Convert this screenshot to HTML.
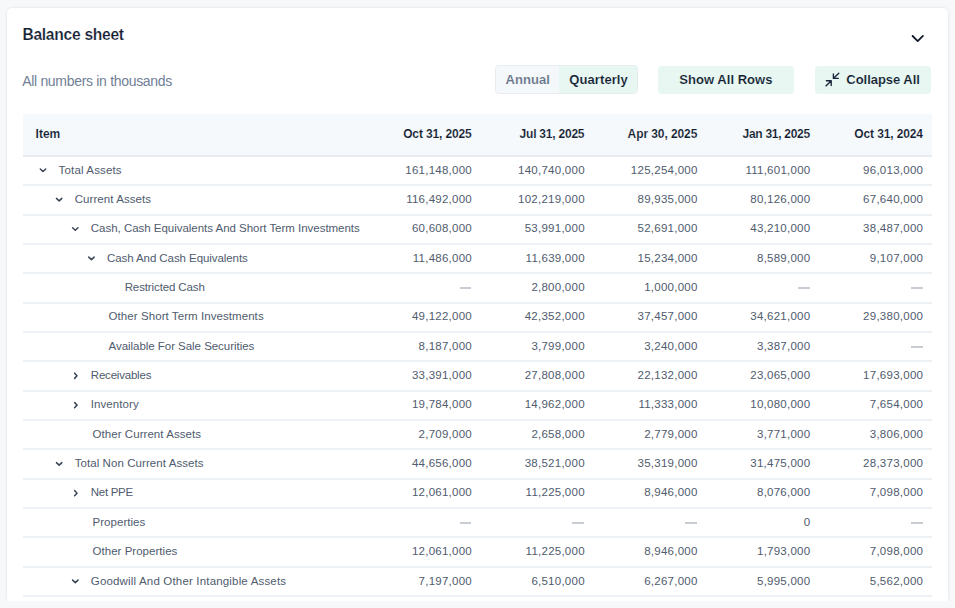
<!DOCTYPE html>
<html><head><meta charset="utf-8"><style>
*{margin:0;padding:0;box-sizing:border-box}
html,body{width:955px;height:608px;overflow:hidden;background:#f7f8fa;font-family:"Liberation Sans",sans-serif}
.card{position:absolute;left:6.8px;top:7.6px;width:940.9px;height:593.4px;background:#fff;border-radius:5px 5px 0 0;box-shadow:0 0 3px rgba(15,23,42,0.10)}
.bstrip{position:absolute;left:0;top:601px;width:955px;height:7px;background:#f7f8fa}
.t{position:absolute;white-space:nowrap;line-height:1}
.title{font-size:15.6px;font-weight:bold;color:#141e33;-webkit-text-stroke:0.2px #fff}
.sub{font-size:14px;color:#718096}
.btn{position:absolute;background:#e8f7f2;border-radius:4px}
.bt{font-size:13px;font-weight:bold;color:#141e33;-webkit-text-stroke:0.12px #e8f7f2}
.thead{position:absolute;left:22.5px;top:113.67px;width:909.5px;height:43.0px;background:#f6f9fc;}
.th{font-size:12px;font-weight:bold;color:#141e33;-webkit-text-stroke:0.12px #f6f9fc}
.ln{position:absolute;left:22.5px;width:909.5px;height:2px}
.td{font-size:11.5px;color:#4f5b6e}
.num{font-size:11.5px;color:#4f5b6e;text-align:right}
.dash{color:#c8ccd3}
svg{position:absolute;overflow:visible}
</style></head><body>
<div class="card"></div>
<div class="bstrip"></div>
<div class="t title" style="left:22.40px;top:26.79px;letter-spacing:-0.267px;">Balance sheet</div>
<svg style="left:0;top:0" width="955" height="608"><path d="M912.6 36 L917.7 41.1 L922.9 35.9" fill="none" stroke="#111827" stroke-width="1.8" stroke-linecap="round" stroke-linejoin="round"/></svg>
<div class="t sub" style="left:22.20px;top:73.75px;letter-spacing:-0.310px;">All numbers in thousands</div>
<div class="btn" style="left:495.4px;top:65.3px;width:143px;height:28.6px;background:#f5f8fb;border:1px solid #e8ecf1;border-radius:3.5px;overflow:hidden"><div style="position:absolute;left:63px;top:0;width:80px;height:100%;background:#e8f7f2"></div></div>
<div class="t bt" style="left:505.60px;top:73.10px;letter-spacing:0.026px;color:#66748a;-webkit-text-stroke:0.12px #f5f8fb;">Annual</div>
<div class="t bt" style="left:569.30px;top:73.10px;letter-spacing:0.088px;">Quarterly</div>
<div class="btn" style="left:658.2px;top:65.5px;width:136.2px;height:28.3px"></div>
<div class="t bt" style="left:679.30px;top:73.10px;letter-spacing:0.041px;">Show All Rows</div>
<div class="btn" style="left:815.2px;top:65.5px;width:116px;height:28.3px"></div>
<svg style="left:0;top:0" width="955" height="608"><g fill="none" stroke="#17223b" stroke-width="1.35" stroke-linecap="round" stroke-linejoin="round"><path d="M833.4 74 V78.4 H838.3 M833.6 78.2 L838.8 73.2"/><path d="M826.4 80.7 H831.2 V85.5 M831 80.9 L825.9 85.9"/></g></svg>
<div class="t bt" style="left:846.30px;top:73.10px;letter-spacing:-0.027px;">Collapse All</div>
<div class="thead"></div>
<div class="ln" style="top:154.9px;background:#e8ecf1"></div>
<div class="t th" style="left:35.60px;top:128.24px;">Item</div>
<div class="t th" style="left:403.17px;top:127.64px;letter-spacing:-0.135px;">Oct 31, 2025</div>
<div class="t th" style="left:519.58px;top:127.64px;letter-spacing:-0.220px;">Jul 31, 2025</div>
<div class="t th" style="left:627.61px;top:127.64px;letter-spacing:-0.091px;">Apr 30, 2025</div>
<div class="t th" style="left:742.52px;top:127.64px;letter-spacing:-0.282px;">Jan 31, 2025</div>
<div class="t th" style="left:854.37px;top:127.64px;letter-spacing:-0.135px;">Oct 31, 2024</div>
<div class="ln" style="top:184.233px;background:#eef1f5"></div>
<svg style="left:0;top:0" width="955" height="608"><path d="M40.30 169.05 L43.00 171.55 L45.70 169.05" fill="none" stroke="#3a4556" stroke-width="1.5" stroke-linecap="round" stroke-linejoin="round"/></svg>
<div class="t td" style="left:58.60px;top:164.52px;letter-spacing:0.148px;">Total Assets</div>
<div class="t num" style="left:405.25px;top:164.52px;letter-spacing:0.256px;">161,148,000</div>
<div class="t num" style="left:518.05px;top:164.52px;letter-spacing:0.256px;">140,740,000</div>
<div class="t num" style="left:630.85px;top:164.52px;letter-spacing:0.256px;">125,254,000</div>
<div class="t num" style="left:745.43px;top:164.52px;letter-spacing:0.250px;">111,601,000</div>
<div class="t num" style="left:863.12px;top:164.52px;letter-spacing:0.253px;">96,013,000</div>
<div class="ln" style="top:213.567px;background:#eef1f5"></div>
<svg style="left:0;top:0" width="955" height="608"><path d="M56.45 198.41 L59.15 200.91 L61.85 198.41" fill="none" stroke="#3a4556" stroke-width="1.5" stroke-linecap="round" stroke-linejoin="round"/></svg>
<div class="t td" style="left:74.70px;top:193.88px;letter-spacing:0.073px;">Current Assets</div>
<div class="t num" style="left:406.14px;top:193.88px;letter-spacing:0.253px;">116,492,000</div>
<div class="t num" style="left:518.05px;top:193.88px;letter-spacing:0.256px;">102,219,000</div>
<div class="t num" style="left:637.52px;top:193.88px;letter-spacing:0.253px;">89,935,000</div>
<div class="t num" style="left:750.32px;top:193.88px;letter-spacing:0.253px;">80,126,000</div>
<div class="t num" style="left:863.12px;top:193.88px;letter-spacing:0.253px;">67,640,000</div>
<div class="ln" style="top:242.900px;background:#eef1f5"></div>
<svg style="left:0;top:0" width="955" height="608"><path d="M72.60 227.77 L75.30 230.27 L78.00 227.77" fill="none" stroke="#3a4556" stroke-width="1.5" stroke-linecap="round" stroke-linejoin="round"/></svg>
<div class="t td" style="left:90.80px;top:223.24px;letter-spacing:-0.025px;">Cash, Cash Equivalents And Short Term Investments</div>
<div class="t num" style="left:411.92px;top:223.24px;letter-spacing:0.253px;">60,608,000</div>
<div class="t num" style="left:524.72px;top:223.24px;letter-spacing:0.253px;">53,991,000</div>
<div class="t num" style="left:637.52px;top:223.24px;letter-spacing:0.253px;">52,691,000</div>
<div class="t num" style="left:750.32px;top:223.24px;letter-spacing:0.253px;">43,210,000</div>
<div class="t num" style="left:863.12px;top:223.24px;letter-spacing:0.253px;">38,487,000</div>
<div class="ln" style="top:272.233px;background:#eef1f5"></div>
<svg style="left:0;top:0" width="955" height="608"><path d="M88.75 257.13 L91.45 259.63 L94.15 257.13" fill="none" stroke="#3a4556" stroke-width="1.5" stroke-linecap="round" stroke-linejoin="round"/></svg>
<div class="t td" style="left:106.90px;top:252.60px;letter-spacing:-0.068px;">Cash And Cash Equivalents</div>
<div class="t num" style="left:412.81px;top:252.60px;letter-spacing:0.250px;">11,486,000</div>
<div class="t num" style="left:525.61px;top:252.60px;letter-spacing:0.250px;">11,639,000</div>
<div class="t num" style="left:637.52px;top:252.60px;letter-spacing:0.253px;">15,234,000</div>
<div class="t num" style="left:756.99px;top:252.60px;letter-spacing:0.250px;">8,589,000</div>
<div class="t num" style="left:869.79px;top:252.60px;letter-spacing:0.250px;">9,107,000</div>
<div class="ln" style="top:301.567px;background:#eef1f5"></div>
<div class="t td" style="left:124.70px;top:281.96px;letter-spacing:-0.119px;">Restricted Cash</div>
<div style="position:absolute;left:459.60px;top:287.19px;width:11.8px;height:2px;background:#c8ccd3"></div>
<div class="t num" style="left:531.39px;top:281.96px;letter-spacing:0.250px;">2,800,000</div>
<div class="t num" style="left:644.19px;top:281.96px;letter-spacing:0.250px;">1,000,000</div>
<div style="position:absolute;left:798.00px;top:287.19px;width:11.8px;height:2px;background:#c8ccd3"></div>
<div style="position:absolute;left:910.80px;top:287.19px;width:11.8px;height:2px;background:#c8ccd3"></div>
<div class="ln" style="top:330.900px;background:#eef1f5"></div>
<div class="t td" style="left:108.60px;top:311.32px;letter-spacing:0.069px;">Other Short Term Investments</div>
<div class="t num" style="left:411.92px;top:311.32px;letter-spacing:0.253px;">49,122,000</div>
<div class="t num" style="left:524.72px;top:311.32px;letter-spacing:0.253px;">42,352,000</div>
<div class="t num" style="left:637.52px;top:311.32px;letter-spacing:0.253px;">37,457,000</div>
<div class="t num" style="left:750.32px;top:311.32px;letter-spacing:0.253px;">34,621,000</div>
<div class="t num" style="left:863.12px;top:311.32px;letter-spacing:0.253px;">29,380,000</div>
<div class="ln" style="top:360.233px;background:#eef1f5"></div>
<div class="t td" style="left:108.60px;top:340.68px;letter-spacing:-0.041px;">Available For Sale Securities</div>
<div class="t num" style="left:418.59px;top:340.68px;letter-spacing:0.250px;">8,187,000</div>
<div class="t num" style="left:531.39px;top:340.68px;letter-spacing:0.250px;">3,799,000</div>
<div class="t num" style="left:644.19px;top:340.68px;letter-spacing:0.250px;">3,240,000</div>
<div class="t num" style="left:756.99px;top:340.68px;letter-spacing:0.250px;">3,387,000</div>
<div style="position:absolute;left:910.80px;top:345.91px;width:11.8px;height:2px;background:#c8ccd3"></div>
<div class="ln" style="top:389.566px;background:#eef1f5"></div>
<svg style="left:0;top:0" width="955" height="608"><path d="M74.60 373.17 L77.00 375.77 L74.60 378.37" fill="none" stroke="#3a4556" stroke-width="1.5" stroke-linecap="round" stroke-linejoin="round"/></svg>
<div class="t td" style="left:90.80px;top:370.04px;letter-spacing:-0.204px;">Receivables</div>
<div class="t num" style="left:411.92px;top:370.04px;letter-spacing:0.253px;">33,391,000</div>
<div class="t num" style="left:524.72px;top:370.04px;letter-spacing:0.253px;">27,808,000</div>
<div class="t num" style="left:637.52px;top:370.04px;letter-spacing:0.253px;">22,132,000</div>
<div class="t num" style="left:750.32px;top:370.04px;letter-spacing:0.253px;">23,065,000</div>
<div class="t num" style="left:863.12px;top:370.04px;letter-spacing:0.253px;">17,693,000</div>
<div class="ln" style="top:418.900px;background:#eef1f5"></div>
<svg style="left:0;top:0" width="955" height="608"><path d="M74.60 402.53 L77.00 405.13 L74.60 407.73" fill="none" stroke="#3a4556" stroke-width="1.5" stroke-linecap="round" stroke-linejoin="round"/></svg>
<div class="t td" style="left:90.80px;top:399.40px;letter-spacing:0.070px;">Inventory</div>
<div class="t num" style="left:411.92px;top:399.40px;letter-spacing:0.253px;">19,784,000</div>
<div class="t num" style="left:524.72px;top:399.40px;letter-spacing:0.253px;">14,962,000</div>
<div class="t num" style="left:638.41px;top:399.40px;letter-spacing:0.250px;">11,333,000</div>
<div class="t num" style="left:750.32px;top:399.40px;letter-spacing:0.253px;">10,080,000</div>
<div class="t num" style="left:869.79px;top:399.40px;letter-spacing:0.250px;">7,654,000</div>
<div class="ln" style="top:448.233px;background:#eef1f5"></div>
<div class="t td" style="left:92.50px;top:428.76px;letter-spacing:0.060px;">Other Current Assets</div>
<div class="t num" style="left:418.59px;top:428.76px;letter-spacing:0.250px;">2,709,000</div>
<div class="t num" style="left:531.39px;top:428.76px;letter-spacing:0.250px;">2,658,000</div>
<div class="t num" style="left:644.19px;top:428.76px;letter-spacing:0.250px;">2,779,000</div>
<div class="t num" style="left:756.99px;top:428.76px;letter-spacing:0.250px;">3,771,000</div>
<div class="t num" style="left:869.79px;top:428.76px;letter-spacing:0.250px;">3,806,000</div>
<div class="ln" style="top:477.566px;background:#eef1f5"></div>
<svg style="left:0;top:0" width="955" height="608"><path d="M56.45 462.65 L59.15 465.15 L61.85 462.65" fill="none" stroke="#3a4556" stroke-width="1.5" stroke-linecap="round" stroke-linejoin="round"/></svg>
<div class="t td" style="left:74.70px;top:458.12px;letter-spacing:0.074px;">Total Non Current Assets</div>
<div class="t num" style="left:411.92px;top:458.12px;letter-spacing:0.253px;">44,656,000</div>
<div class="t num" style="left:524.72px;top:458.12px;letter-spacing:0.253px;">38,521,000</div>
<div class="t num" style="left:637.52px;top:458.12px;letter-spacing:0.253px;">35,319,000</div>
<div class="t num" style="left:750.32px;top:458.12px;letter-spacing:0.253px;">31,475,000</div>
<div class="t num" style="left:863.12px;top:458.12px;letter-spacing:0.253px;">28,373,000</div>
<div class="ln" style="top:506.900px;background:#eef1f5"></div>
<svg style="left:0;top:0" width="955" height="608"><path d="M74.60 490.61 L77.00 493.21 L74.60 495.81" fill="none" stroke="#3a4556" stroke-width="1.5" stroke-linecap="round" stroke-linejoin="round"/></svg>
<div class="t td" style="left:90.80px;top:487.48px;letter-spacing:-0.299px;">Net PPE</div>
<div class="t num" style="left:411.92px;top:487.48px;letter-spacing:0.253px;">12,061,000</div>
<div class="t num" style="left:525.61px;top:487.48px;letter-spacing:0.250px;">11,225,000</div>
<div class="t num" style="left:644.19px;top:487.48px;letter-spacing:0.250px;">8,946,000</div>
<div class="t num" style="left:756.99px;top:487.48px;letter-spacing:0.250px;">8,076,000</div>
<div class="t num" style="left:869.79px;top:487.48px;letter-spacing:0.250px;">7,098,000</div>
<div class="ln" style="top:536.233px;background:#eef1f5"></div>
<div class="t td" style="left:92.50px;top:516.84px;letter-spacing:0.041px;">Properties</div>
<div style="position:absolute;left:459.60px;top:522.07px;width:11.8px;height:2px;background:#c8ccd3"></div>
<div style="position:absolute;left:572.40px;top:522.07px;width:11.8px;height:2px;background:#c8ccd3"></div>
<div style="position:absolute;left:685.20px;top:522.07px;width:11.8px;height:2px;background:#c8ccd3"></div>
<div class="t num" style="left:803.71px;top:516.84px;letter-spacing:0.281px;">0</div>
<div style="position:absolute;left:910.80px;top:522.07px;width:11.8px;height:2px;background:#c8ccd3"></div>
<div class="ln" style="top:565.566px;background:#eef1f5"></div>
<div class="t td" style="left:92.50px;top:546.20px;letter-spacing:0.030px;">Other Properties</div>
<div class="t num" style="left:411.92px;top:546.20px;letter-spacing:0.253px;">12,061,000</div>
<div class="t num" style="left:525.61px;top:546.20px;letter-spacing:0.250px;">11,225,000</div>
<div class="t num" style="left:644.19px;top:546.20px;letter-spacing:0.250px;">8,946,000</div>
<div class="t num" style="left:756.99px;top:546.20px;letter-spacing:0.250px;">1,793,000</div>
<div class="t num" style="left:869.79px;top:546.20px;letter-spacing:0.250px;">7,098,000</div>
<div class="ln" style="top:594.899px;background:#eef1f5"></div>
<svg style="left:0;top:0" width="955" height="608"><path d="M72.60 580.09 L75.30 582.59 L78.00 580.09" fill="none" stroke="#3a4556" stroke-width="1.5" stroke-linecap="round" stroke-linejoin="round"/></svg>
<div class="t td" style="left:90.80px;top:575.56px;letter-spacing:0.172px;">Goodwill And Other Intangible Assets</div>
<div class="t num" style="left:418.59px;top:575.56px;letter-spacing:0.250px;">7,197,000</div>
<div class="t num" style="left:531.39px;top:575.56px;letter-spacing:0.250px;">6,510,000</div>
<div class="t num" style="left:644.19px;top:575.56px;letter-spacing:0.250px;">6,267,000</div>
<div class="t num" style="left:756.99px;top:575.56px;letter-spacing:0.250px;">5,995,000</div>
<div class="t num" style="left:869.79px;top:575.56px;letter-spacing:0.250px;">5,562,000</div>
</body></html>
